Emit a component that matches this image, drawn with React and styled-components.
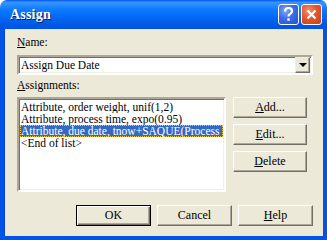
import React, { useState } from 'react';
import styled, { createGlobalStyle, css } from 'styled-components';

const GlobalStyle = createGlobalStyle`
  html, body {
    margin: 0;
    padding: 0;
    background: #ffffff;
  }
  * {
    box-sizing: border-box;
  }
`;

const Window = styled.div`
  width: 327px;
  height: 240px;
  display: flex;
  flex-direction: column;
  font-family: "Liberation Serif", "Times New Roman", serif;
  font-size: 11.5px;
  color: #000;
`;

const TitleBar = styled.div`
  height: 29px;
  flex-shrink: 0;
  display: flex;
  align-items: center;
  padding: 0 5px 0 10px;
  border-radius: 7px 7px 0 0;
  background: linear-gradient(
    to bottom,
    #0058ee 0%,
    #3a93ff 8%,
    #288eff 16%,
    #127dff 30%,
    #036ffc 50%,
    #0262ee 70%,
    #0057e5 86%,
    #0054e3 100%
  );
`;

const Title = styled.span`
  flex: 1;
  color: #fff;
  font-family: "Liberation Serif", serif;
  font-weight: bold;
  font-size: 14px;
  text-shadow: 1px 1px 0 #0a1e6a;
  letter-spacing: 0.2px;
`;

const CaptionButtons = styled.div`
  display: flex;
  gap: 2px;
`;

const CaptionButton = styled.div`
  width: 21px;
  height: 21px;
  border: 1px solid #fff;
  border-radius: 3px;
  display: flex;
  align-items: center;
  justify-content: center;
  ${(p) =>
    p.$close
      ? css`
          background: radial-gradient(circle at 35% 30%, #f0926f 0%, #e2562c 45%, #c6401a 100%);
        `
      : css`
          background: radial-gradient(circle at 35% 30%, #7fa8f8 0%, #3a6ee8 45%, #2350d0 100%);
        `}
`;

const Body = styled.div`
  flex: 1;
  display: flex;
  flex-direction: column;
  background: #ece9d8;
  border: 4px solid #0054e3;
  border-top: none;
  box-shadow: inset 1px 0 0 #0a3fd0;
  padding: 7px 10px 10px 13px;
`;

const Label = styled.div`
  line-height: 13px;
  height: 13px;
  margin-top: ${(p) => p.$mt || 0}px;
`;

const Key = styled.span`
  text-decoration: underline;
`;

const Combo = styled.div`
  margin-top: 6px;
  height: 20px;
  display: flex;
  align-items: center;
  background: #fff;
  border: 2px solid;
  border-color: #aca899 #fff #fff #aca899;
  box-shadow: inset 1px 1px 0 #716f64, inset -1px -1px 0 #f1efe2;
  padding: 0 1px 0 1px;
`;

const ComboText = styled.span`
  flex: 1;
  padding-left: 1px;
  line-height: 14px;
`;

const DropButton = styled.div`
  width: 15px;
  height: 16px;
  background: #ece9d8;
  border: 1px solid;
  border-color: #f1efe2 #716f64 #716f64 #f1efe2;
  box-shadow: inset -1px -1px 0 #aca899;
  display: flex;
  align-items: center;
  justify-content: center;
`;

const Arrow = styled.div`
  width: 0;
  height: 0;
  border-left: 4px solid transparent;
  border-right: 4px solid transparent;
  border-top: 4px solid #000;
`;

const Middle = styled.div`
  margin-top: 5px;
  display: grid;
  grid-template-columns: 209px 74px;
  column-gap: 7px;
`;

const ListBox = styled.div`
  height: 95px;
  background: #fff;
  border: 2px solid;
  border-color: #aca899 #fff #fff #aca899;
  box-shadow: inset 1px 1px 0 #716f64, inset -1px -1px 0 #f1efe2;
  padding: 2px 1px 0 1px;
  overflow: hidden;
`;

const ListItem = styled.div`
  height: 12px;
  line-height: 12px;
  padding-left: 1px;
  white-space: nowrap;
  overflow: hidden;
  ${(p) =>
    p.$selected &&
    css`
      background: #316ac5;
      color: #fff;
      outline: 1px dotted #f0c040;
      outline-offset: -1px;
    `}
`;

const SideButtons = styled.div`
  display: flex;
  flex-direction: column;
  gap: 6px;
`;

const Button = styled.div`
  width: ${(p) => p.$w || 74}px;
  height: 21px;
  display: flex;
  align-items: center;
  justify-content: center;
  background: #ece9d8;
  border: 1px solid;
  border-color: #fff #716f64 #716f64 #fff;
  box-shadow: inset -1px -1px 0 #aca899;
  font-size: 12px;
  line-height: 13px;
  ${(p) =>
    p.$default &&
    css`
      outline: 1px solid #000;
      outline-offset: -1px;
      border-color: #000;
      box-shadow: inset 1px 1px 0 #fff, inset -1px -1px 0 #716f64, inset -2px -2px 0 #aca899;
    `}
`;

const Footer = styled.div`
  margin-top: 13px;
  display: flex;
  justify-content: flex-end;
  gap: 6px;
`;

const HelpGlyph = () => (
  <svg width="13" height="15" viewBox="0 0 13 15">
    <path
      d="M3 4.5 C3 2 4.5 1 6.5 1 C8.7 1 10 2.3 10 4.2 C10 6 8.8 6.6 7.6 7.4 C6.8 7.9 6.5 8.4 6.5 9.6"
      stroke="#fff"
      strokeWidth="2.2"
      fill="none"
    />
    <rect x="5.3" y="11.3" width="2.4" height="2.4" fill="#fff" />
  </svg>
);

const CloseGlyph = () => (
  <svg width="11" height="11" viewBox="0 0 11 11">
    <path d="M1.5 1.5 L9.5 9.5 M9.5 1.5 L1.5 9.5" stroke="#fff" strokeWidth="2.2" />
  </svg>
);

const App = () => {
  const [items] = useState([
    'Attribute, order weight, unif(1,2)',
    'Attribute, process time, expo(0.95)',
    'Attribute, due date, tnow+SAQUE(Process 1',
    '<End of list>',
  ]);
  const [selected] = useState(2);

  return (
    <Window>
      <GlobalStyle />
      <TitleBar>
        <Title>Assign</Title>
        <CaptionButtons>
          <CaptionButton>
            <HelpGlyph />
          </CaptionButton>
          <CaptionButton $close>
            <CloseGlyph />
          </CaptionButton>
        </CaptionButtons>
      </TitleBar>
      <Body>
        <Label>
          <Key>N</Key>ame:
        </Label>
        <Combo>
          <ComboText>Assign Due Date</ComboText>
          <DropButton>
            <Arrow />
          </DropButton>
        </Combo>
        <Label $mt={4}>
          <Key>A</Key>ssignments:
        </Label>
        <Middle>
          <ListBox>
            {items.map((item, i) => (
              <ListItem key={i} $selected={i === selected}>
                {item}
              </ListItem>
            ))}
          </ListBox>
          <SideButtons>
            <Button>
              <span>
                <Key>A</Key>dd...
              </span>
            </Button>
            <Button>
              <span>
                <Key>E</Key>dit...
              </span>
            </Button>
            <Button>
              <span>
                <Key>D</Key>elete
              </span>
            </Button>
          </SideButtons>
        </Middle>
        <Footer>
          <Button $w={75} $default>
            OK
          </Button>
          <Button $w={75}>Cancel</Button>
          <Button $w={75}>
            <span>
              <Key>H</Key>elp
            </span>
          </Button>
        </Footer>
      </Body>
    </Window>
  );
};

export default App;
